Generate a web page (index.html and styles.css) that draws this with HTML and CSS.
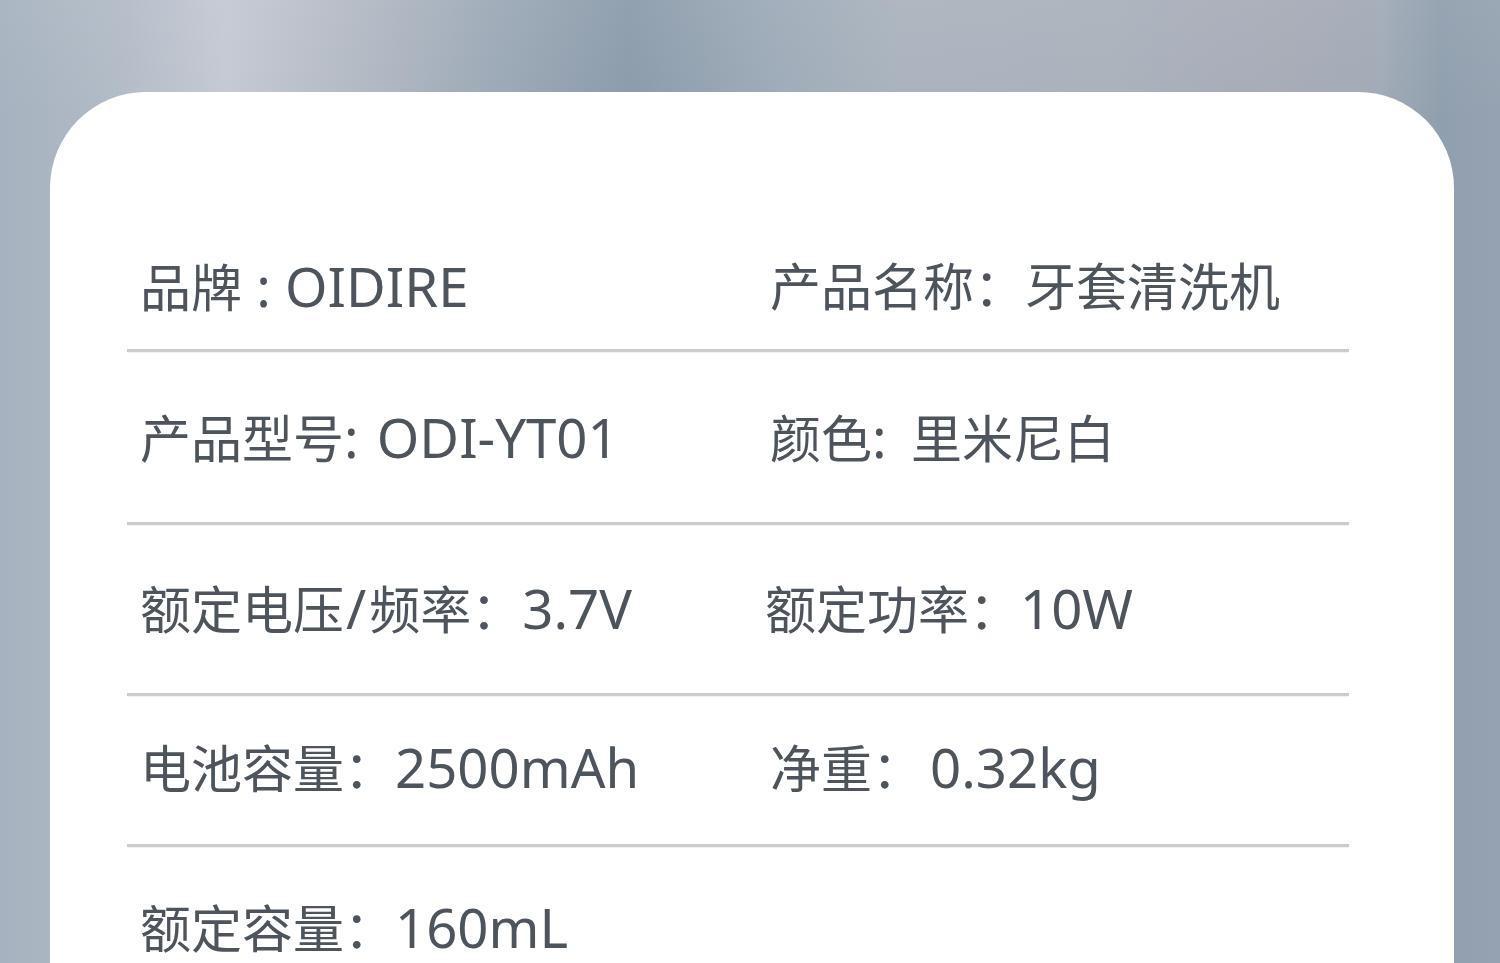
FILE: index.html
```html
<!DOCTYPE html>
<html lang="zh-CN">
<head>
<meta charset="utf-8">
<title>产品参数</title>
<link rel="stylesheet" href="styles.css">
</head>
<body>
<div class="page">
  <div class="card">
    <div class="specs">
      <div class="row row--first">
        <div class="cell">品牌<span class="en"> : OIDIRE</span></div>
        <div class="cell">产品名称：牙套清洗机</div>
      </div>
      <div class="row row--second">
        <div class="cell">产品型号<span class="en"><span class="sep sep--sm">:</span> ODI-YT01</span></div>
        <div class="cell">颜色<span class="en sep">:</span> 里米尼白</div>
      </div>
      <div class="row row--third">
        <div class="cell">额定电压<span class="en slash">/</span>频率：<span class="en">3.7V</span></div>
        <div class="cell cell--shift">额定功率：<span class="en">10W</span></div>
      </div>
      <div class="row row--tight">
        <div class="cell">电池容量：<span class="en">2500mAh</span></div>
        <div class="cell">净重：<span class="en push">0.32kg</span></div>
      </div>
      <div class="row row--last">
        <div class="cell">额定容量：<span class="en">160mL</span></div>
      </div>
    </div>
  </div>
</div>
</body>
</html>
```

FILE: styles.css
```css
html, body {
  margin: 0;
  padding: 0;
}
body {
  width: 1500px;
  height: 963px;
  overflow: hidden;
  font-family: "Noto Sans", "Noto Sans CJK SC", sans-serif;
}
.page {
  height: 963px;
  padding-top: 92px;
  box-sizing: border-box;
  background:
    linear-gradient(180deg, rgba(255,255,255,0.06) 0px, rgba(255,255,255,0) 120px),
    linear-gradient(90deg, #a6b2bf 0%, #b2bbc6 8%, #c4c9d2 15%, #b2b9c3 24%, #9aa7b5 34%, #8b9bab 42%, #9eabb8 52%, #aab3bd 60%, #a9b1bb 74%, #a6abb6 86%, #a1aab6 92%, #909fae 96%, #95a2b1 100%);
}
.card {
  margin-left: 50px;
  width: 1404px;
  height: 871px;
  background: #ffffff;
  border-radius: 96px 96px 0 0;
  padding: 0 105px 0 77px;
  box-sizing: border-box;
  overflow: hidden;
}
.specs {
  display: flex;
  flex-direction: column;
}
.row {
  display: grid;
  grid-template-columns: 630px 1fr;
  padding: 49px 0 48px 13px;
  border-bottom: 3px solid #cbcbcb;
  box-shadow: 0 2px 1px -1px rgba(0,0,0,0.05);
  color: #4d545c;
  font-size: 51px;
  line-height: 72px;
}
.row--first {
  padding-top: 158px;
  padding-bottom: 26px;
}
.row--third {
  padding-top: 47px;
  padding-bottom: 48px;
}
.row--tight {
  padding-top: 35px;
  padding-bottom: 40px;
}
.row--last {
  border-bottom: none;
  box-shadow: none;
  padding-top: 44px;
}
.cell {
  white-space: nowrap;
}
.cell--shift {
  margin-left: -5px;
}
.en {
  font-size: 54.5px;
  line-height: 72px;
}
.sep {
  margin-right: 11px;
}
.sep--sm {
  margin-right: 4px;
}
.slash {
  margin: 0 3px 0 2px;
}
.push {
  margin-left: 7px;
}
```
